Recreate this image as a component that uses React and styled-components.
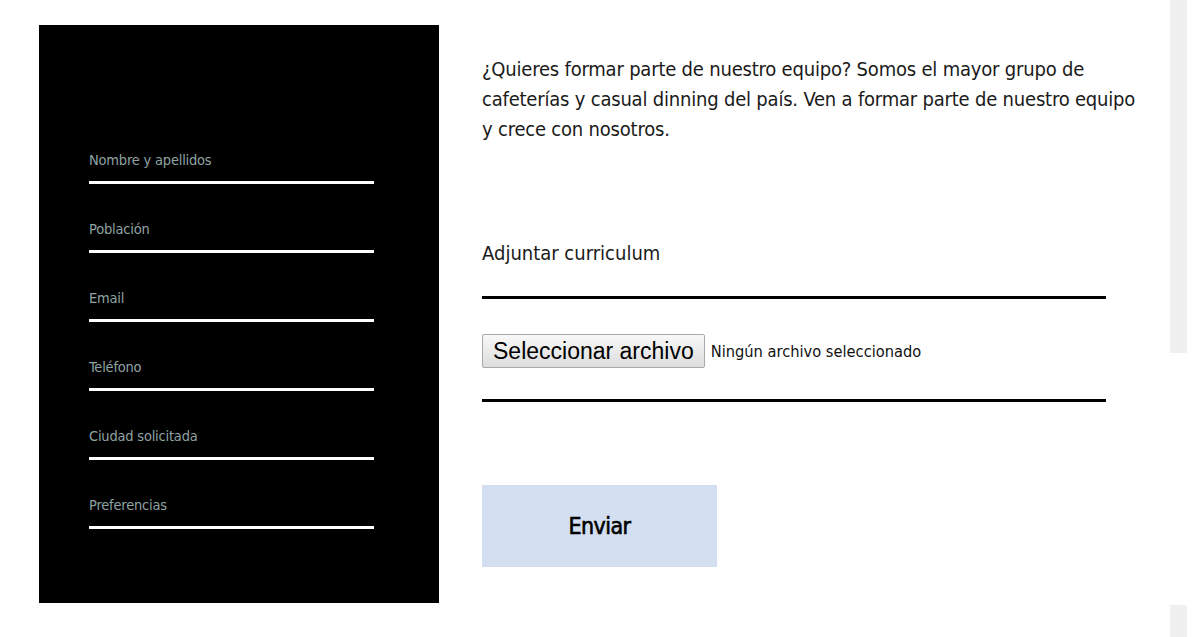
import styled, { createGlobalStyle } from "styled-components";

const GlobalStyle = createGlobalStyle`
  body {
    margin: 0;
    background: #fff;
    font-family: "DejaVu Sans Condensed", "Liberation Sans Narrow", "Liberation Sans", sans-serif;
  }
`;

const Page = styled.div`
  display: flex;
  align-items: flex-start;
  width: 1200px;
  height: 637px;
  overflow: hidden;
`;

const Panel = styled.div`
  box-sizing: border-box;
  margin: 25px 0 0 39px;
  width: 400px;
  height: 578px;
  background: #000;
  padding: 90px 0 0 50px;
  display: flex;
  flex-direction: column;
`;

const Field = styled.div`
  box-sizing: border-box;
  width: 285px;
  height: 69px;
  display: flex;
  flex-direction: column;
  justify-content: flex-end;
  padding-bottom: 12px;
  border-bottom: 3px solid #fff;
`;

const Label = styled.label`
  font-size: 14.5px;
  letter-spacing: -0.2px;
  line-height: 18px;
  color: #8fa3a3;
`;

const Content = styled.div`
  margin-left: 43px;
  width: 660px;
  display: flex;
  flex-direction: column;
  align-items: flex-start;
`;

const Intro = styled.p`
  margin: 54px 0 0;
  font-size: 20px;
  letter-spacing: -0.2px;
  line-height: 30px;
  color: #1a1a1a;
`;

const Heading = styled.h3`
  margin: 94px 0 0;
  font-size: 20px;
  line-height: 30px;
  font-weight: normal;
  color: #1a1a1a;
`;

const Divider = styled.hr`
  margin: ${(p) => p.$top}px 0 0;
  width: 624px;
  height: 3px;
  border: none;
  background: #000;
`;

const FileRow = styled.div`
  margin-top: 35px;
  display: flex;
  align-items: center;
`;

const FileButton = styled.button`
  box-sizing: border-box;
  height: 34px;
  padding: 0 10px;
  font-family: "Liberation Sans", Arial, sans-serif;
  font-size: 23px;
  color: #000;
  background: linear-gradient(#f8f8f8, #dddddd);
  border: 1px solid #a9a9a9;
  border-radius: 2px;
`;

const FileStatus = styled.span`
  margin-left: 6px;
  font-size: 16.3px;
  color: #111;
`;

const Submit = styled.button`
  margin-top: 83px;
  width: 235px;
  height: 82px;
  border: none;
  background: #d3dff0;
  font-family: inherit;
  font-size: 23px;
  letter-spacing: -0.6px;
  color: #000;
  -webkit-text-stroke: 0.6px #000;
`;

const Strip = styled.div`
  margin-left: 28px;
  width: 17px;
  height: 637px;
  display: flex;
  flex-direction: column;
  justify-content: space-between;
`;

const StripBlock = styled.div`
  height: ${(p) => p.$h}px;
  background: #f0f0f0;
`;

const fields = [
  "Nombre y apellidos",
  "Población",
  "Email",
  "Teléfono",
  "Ciudad solicitada",
  "Preferencias",
];

export default function App() {
  return (
    <>
      <GlobalStyle />
      <Page>
        <Panel>
          {fields.map((f) => (
            <Field key={f}>
              <Label>{f}</Label>
            </Field>
          ))}
        </Panel>
        <Content>
          <Intro>
            ¿Quieres formar parte de nuestro equipo? Somos el mayor grupo de
            cafeterías y casual dinning del país. Ven a formar parte de nuestro
            equipo y crece con nosotros.
          </Intro>
          <Heading>Adjuntar curriculum</Heading>
          <Divider $top={28} />
          <FileRow>
            <FileButton type="button">Seleccionar archivo</FileButton>
            <FileStatus>Ningún archivo seleccionado</FileStatus>
          </FileRow>
          <Divider $top={31} />
          <Submit type="button">Enviar</Submit>
        </Content>
        <Strip>
          <StripBlock $h={353} />
          <StripBlock $h={32} />
        </Strip>
      </Page>
    </>
  );
}
